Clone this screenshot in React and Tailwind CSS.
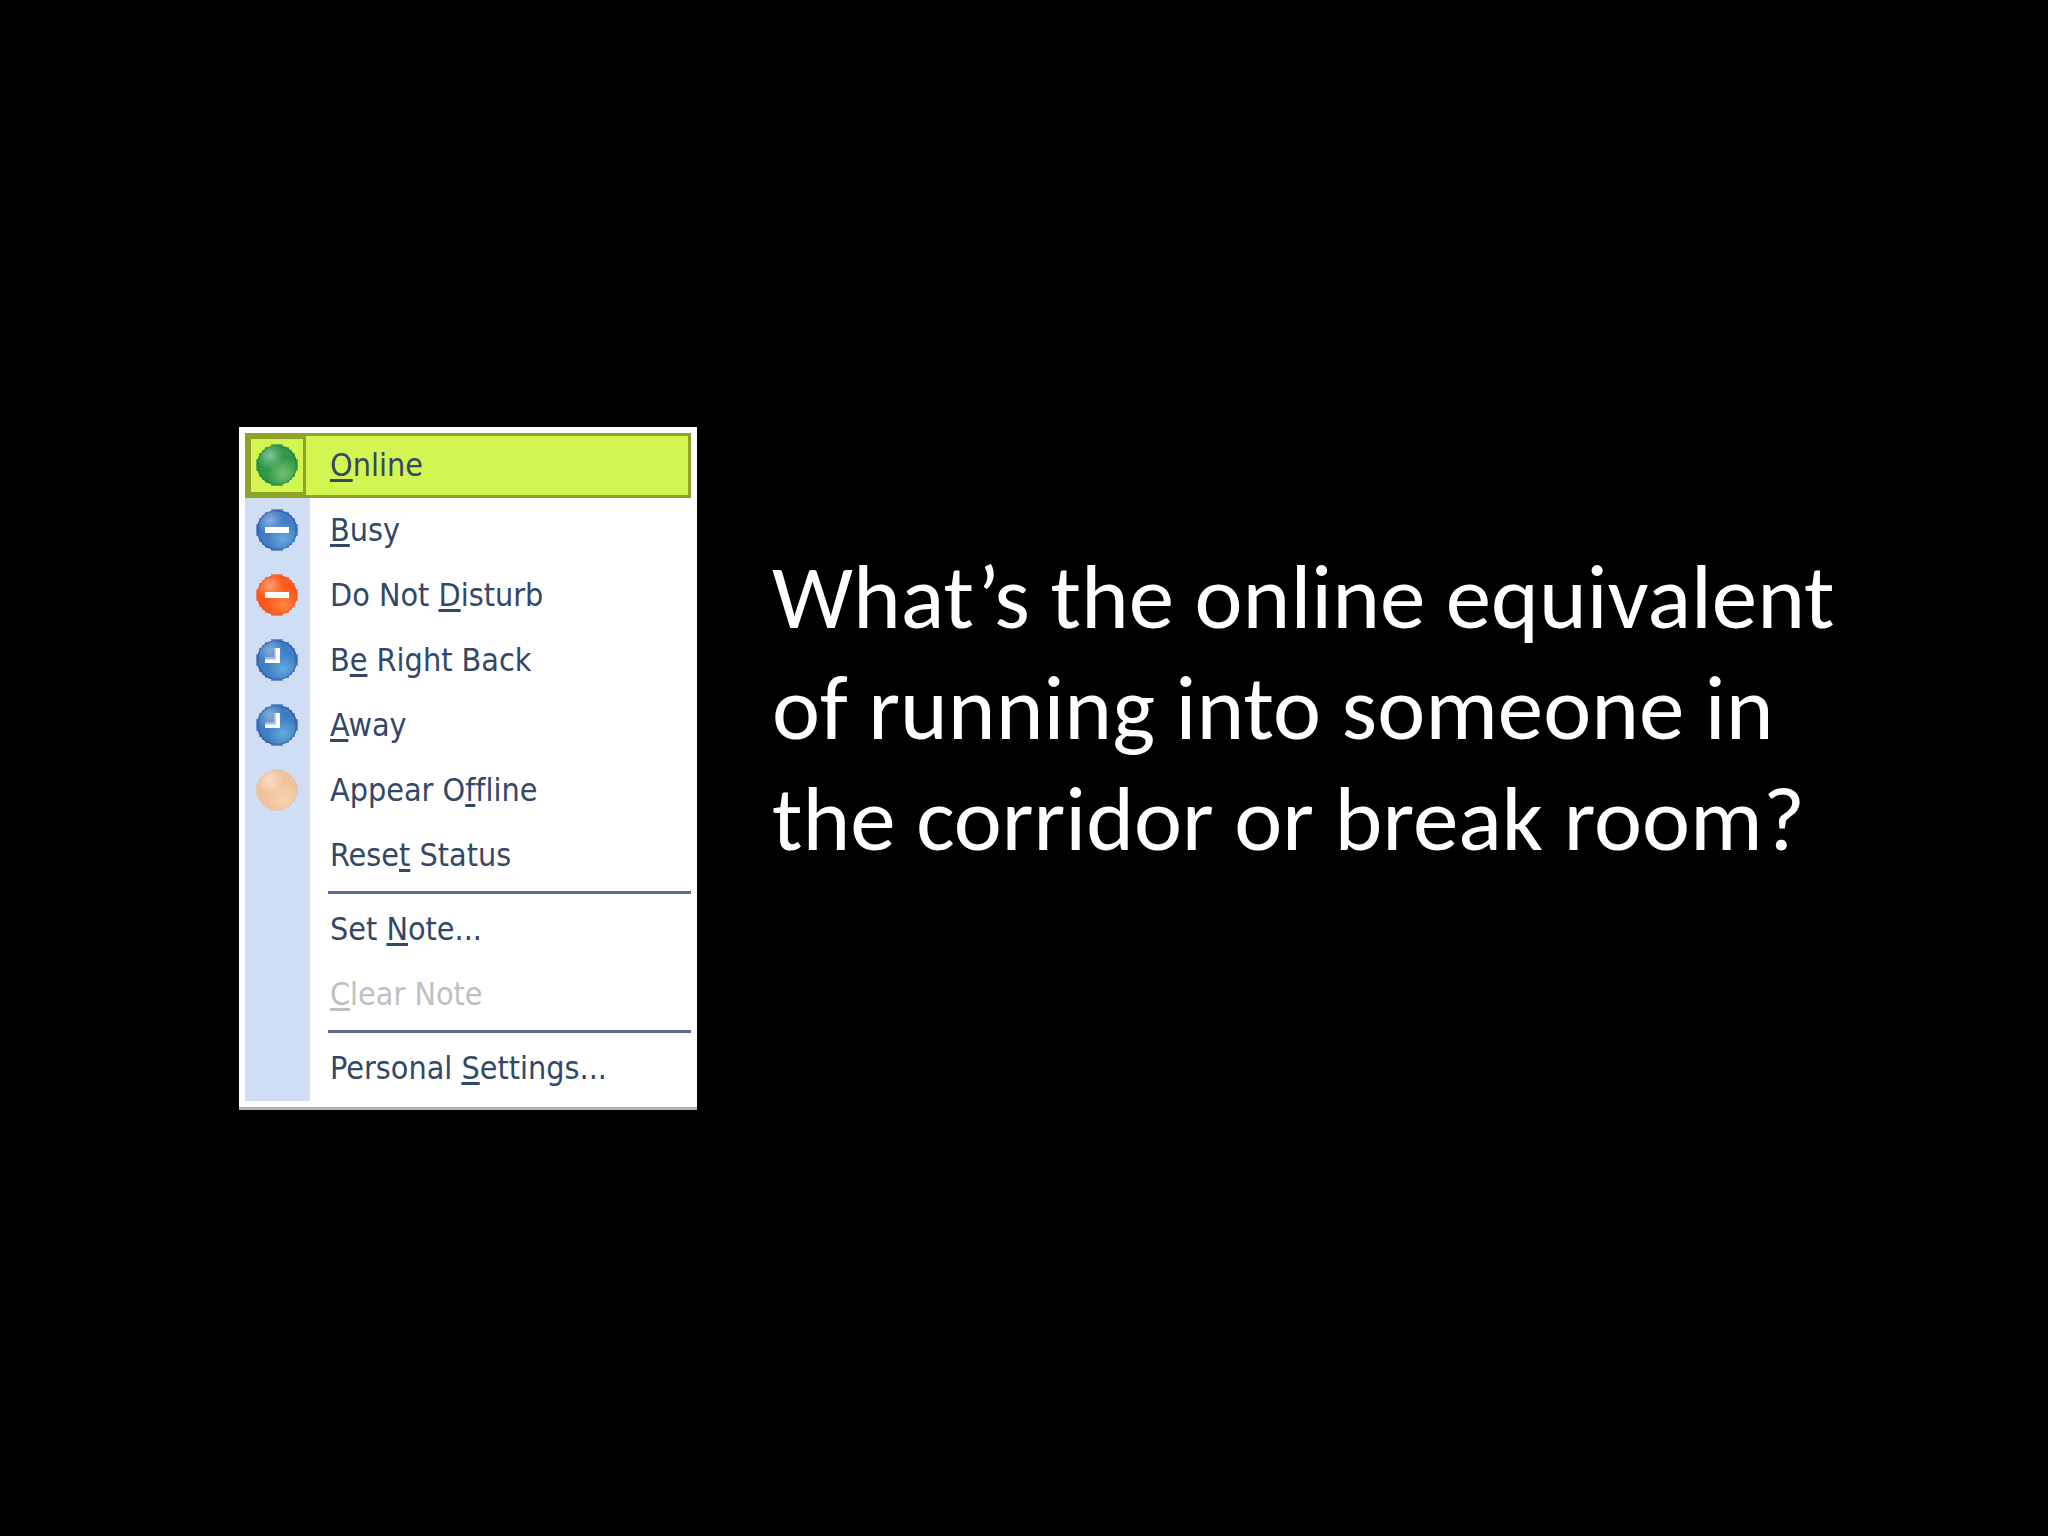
import { Fragment } from "react";
import clsx from "clsx";

const menuItems = [
  { before: "", key: "O", after: "nline", status: "online", active: true },
  { before: "", key: "B", after: "usy", status: "busy" },
  { before: "Do Not ", key: "D", after: "isturb", status: "dnd" },
  { before: "B", key: "e", after: " Right Back", status: "away" },
  { before: "", key: "A", after: "way", status: "away" },
  { before: "Appear O", key: "f", after: "fline", status: "offline" },
  { before: "Rese", key: "t", after: " Status", divider: true },
  { before: "Set ", key: "N", after: "ote..." },
  { before: "", key: "C", after: "lear Note", disabled: true, divider: true },
  { before: "Personal ", key: "S", after: "ettings..." },
];

// light spot, body, lower glow, rim
const statusColors = {
  online: { light: "#7fc49a", body: "#31984a", glow: "#74c070", rim: "#27853f" },
  busy: { light: "#86aedd", body: "#3f7cc4", glow: "#64a9dc", rim: "#3460ab" },
  dnd: { light: "#ff9d6e", body: "#fb5a1c", glow: "#ff8445", rim: "#f4561c" },
  away: { light: "#86aedd", body: "#3f7cc4", glow: "#64a9dc", rim: "#3460ab" },
  offline: { light: "#fbdcc4", body: "#f0c39d", glow: "#f8d3ae", rim: "#eec09c" },
};

const DISC =
  "M5 0H9V1H11V2H12V3H13V5H14V9H13V11H12V12H11V13H9V14H5V13H3V12H2V11H1V9H0V5H1V3H2V2H3V1H5Z";

const StatusIcon = ({ status, id }) => {
  const c = statusColors[status];

  return (
    <svg viewBox="0 0 14 14" className="size-[42px]" aria-hidden="true">
      <defs>
        <radialGradient id={`${id}-light`} cx="0.32" cy="0.26" r="0.34">
          <stop offset="0" stopColor={c.light} />
          <stop offset="1" stopColor={c.light} stopOpacity="0" />
        </radialGradient>
        <radialGradient id={`${id}-glow`} cx="0.66" cy="0.72" r="0.42">
          <stop offset="0" stopColor={c.glow} />
          <stop offset="1" stopColor={c.glow} stopOpacity="0" />
        </radialGradient>
      </defs>
      <path d={DISC} fill={c.rim} opacity="0.6" />
      <circle cx="7" cy="7" r="6.7" fill={c.rim} />
      <circle cx="7" cy="7" r="6.2" fill={c.body} />
      <circle cx="7" cy="7" r="6.5" fill={`url(#${id}-glow)`} />
      <circle cx="7" cy="7" r="6.5" fill={`url(#${id}-light)`} />
      {(status === "busy" || status === "dnd") && (
        <rect x="3" y="6" width="8" height="2" fill="#fff" />
      )}
      {status === "away" && (
        <>
          <path d="M6 3H7V7H3V6H6Z" fill="#fff" opacity="0.4" />
          <path d="M6.6 3H8V8H3V6.8H6.6Z" fill="#fff" />
        </>
      )}
    </svg>
  );
};

const MenuItem = ({ item, id }) => (
  <button
    type="button"
    role="menuitem"
    disabled={item.disabled}
    className={clsx(
      "flex h-[65px] w-full items-stretch border-3 text-left",
      item.active ? "border-[#8ea327] bg-[#d3f552]" : "border-transparent",
      item.disabled ? "text-[#c0c0c0]" : "text-[#334768]"
    )}
  >
    <span
      className={clsx(
        "flex w-[58px] shrink-0 items-center justify-center border-3",
        item.active ? "border-[#8ea327]" : "border-transparent"
      )}
    >
      {item.status && <StatusIcon status={item.status} id={id} />}
    </span>
    <span className="self-center pl-6 whitespace-pre [font-variant-ligatures:none]">
      {item.before}
      <span className="underline decoration-3 underline-offset-3 [text-decoration-skip-ink:none]">
        {item.key}
      </span>
      {item.after}
    </span>
  </button>
);

const StatusMenu = () => (
  <div
    role="menu"
    aria-label="Status"
    className="shrink-0 border-b-3 border-[#b4b5a3] bg-white p-1.5 font-['DejaVu_Sans_Condensed','DejaVu_Sans',sans-serif] text-[32px] leading-10"
  >
    <div className="w-[446px] bg-[linear-gradient(to_right,#cfddf5_65px,#fff_65px)]">
      {menuItems.map((item, i) => (
        <Fragment key={i}>
          <MenuItem item={item} id={`status-${i}`} />
          {item.divider && (
            <div role="separator" className="flex h-[9px] items-center pl-[83px]">
              <div className="h-[3px] w-full bg-[#5d6896]" />
            </div>
          )}
        </Fragment>
      ))}
    </div>
  </div>
);

export default function App() {
  return (
    <main className="flex min-h-screen items-center gap-[75px] bg-black pl-[239px]">
      <StatusMenu />
      <h1 className="max-w-[1100px] pb-[122px] font-['Carlito','Calibri','Lato',sans-serif] text-[91px] leading-[111px] text-white">
        What’s the online equivalent of running into someone in the corridor or break room?
      </h1>
    </main>
  );
}
